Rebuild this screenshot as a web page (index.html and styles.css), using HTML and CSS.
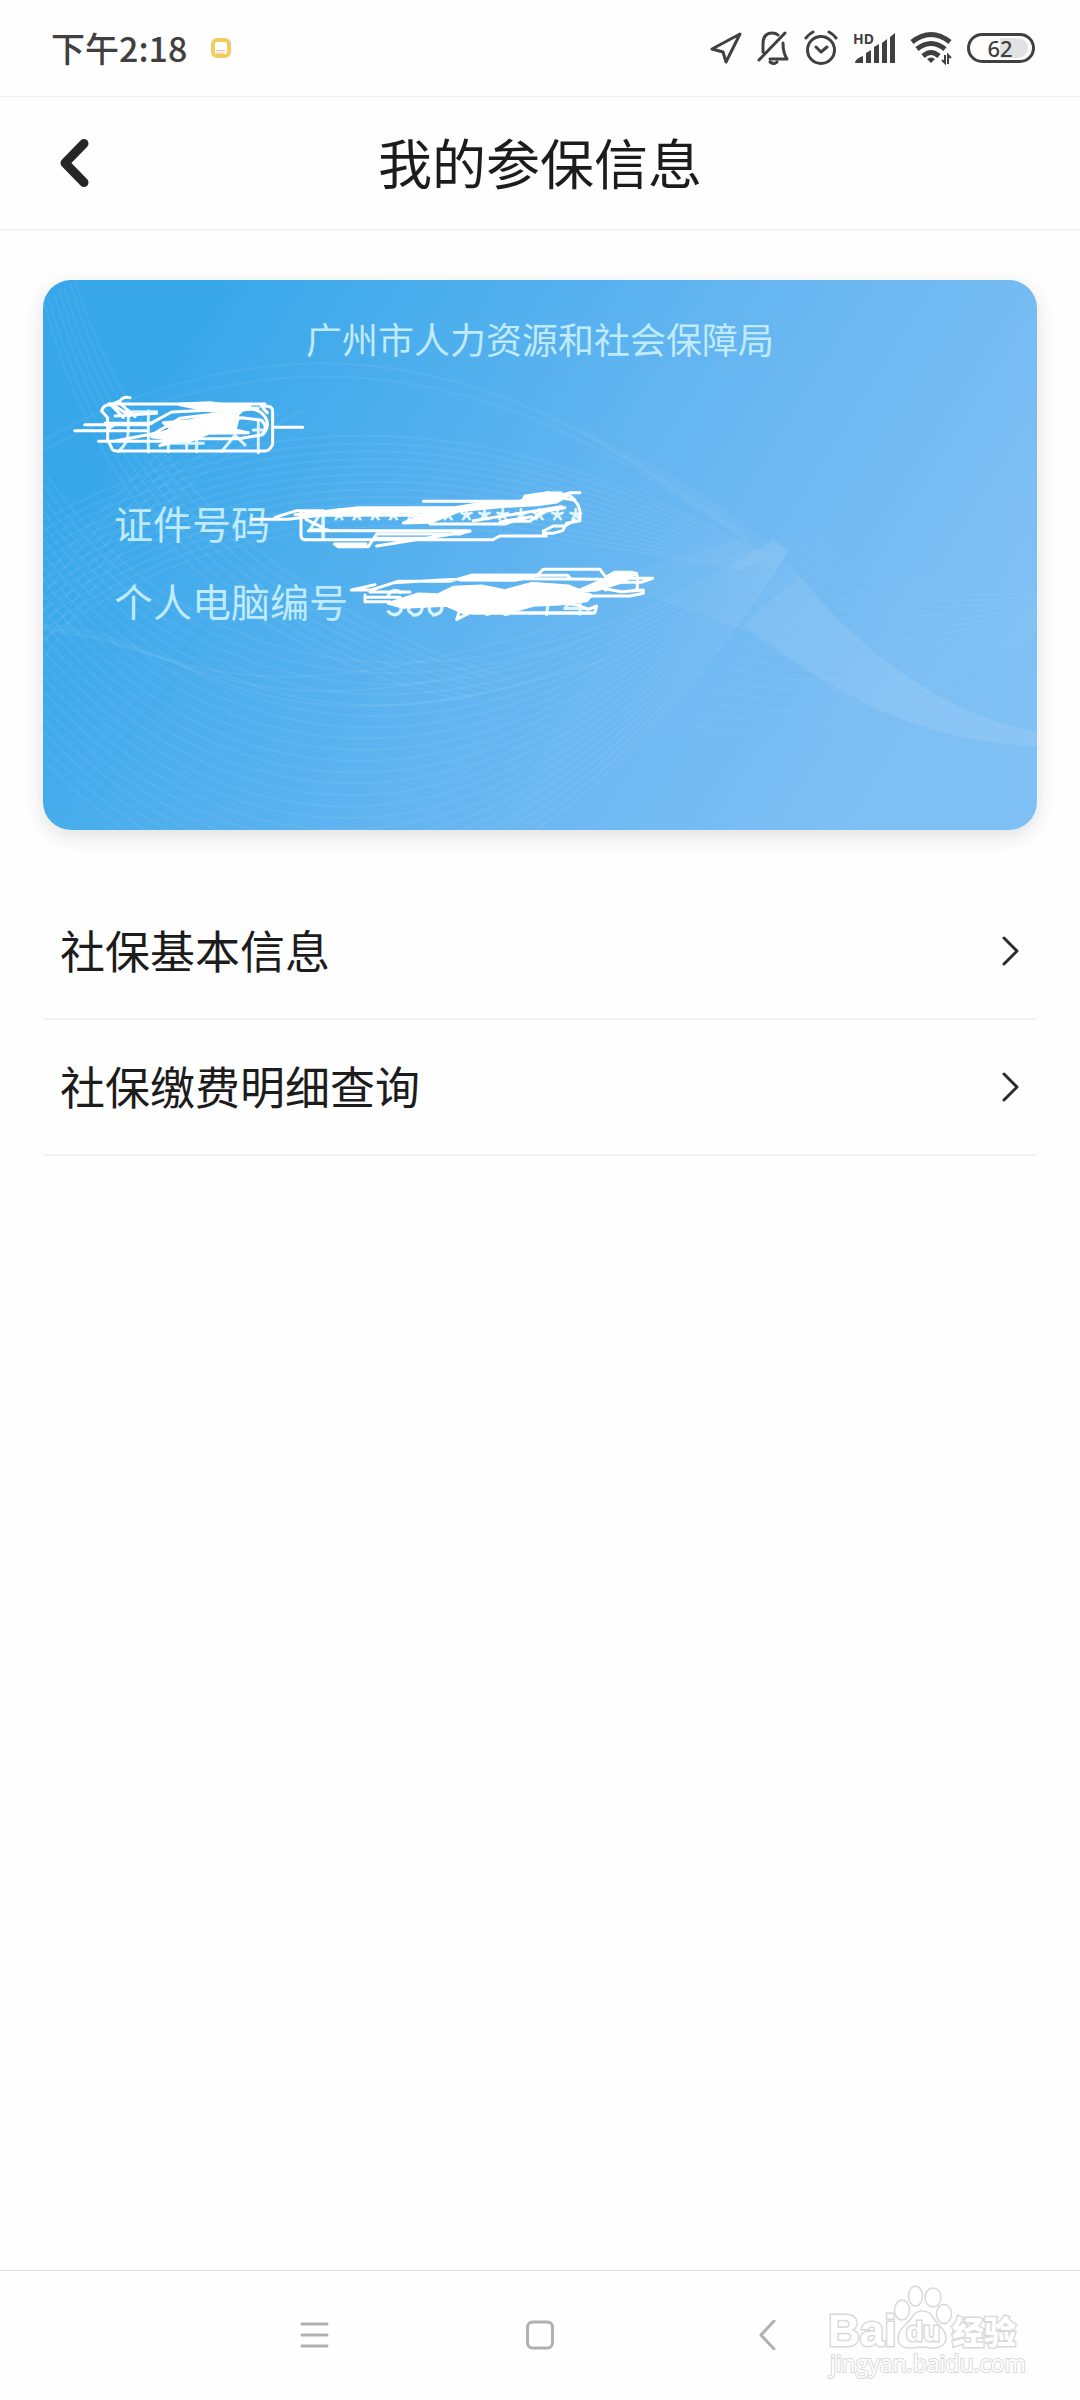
FILE: index.html
```html
<!DOCTYPE html>
<html lang="zh-CN">
<head>
<meta charset="utf-8">
<meta name="viewport" content="width=device-width, initial-scale=1">
<title>我的参保信息</title>
<link rel="stylesheet" href="styles.css">
</head>
<body>
<div class="status">
  <div class="status-left">
    <span>下午2:18</span>
    <svg width="20" height="20" viewBox="0 0 20 20" fill="none"><rect x="2" y="2" width="16" height="16" rx="4" fill="#fff" stroke="#f3cb5f" stroke-width="4"/><path d="M5 12.500h9M5 15h8" stroke="#f8b59a" stroke-width="1"/></svg>
  </div>
  <div class="status-right">
    <svg width="32" height="34" viewBox="0 0 32 34" fill="none" stroke="#404040" stroke-width="3" stroke-linejoin="round"><path d="M30 3 2 18l11 3 3 10z"/></svg>
    <svg width="32" height="34" viewBox="0 0 32 34" fill="none" stroke="#404040" stroke-width="3" stroke-linecap="round" stroke-linejoin="round"><path d="M2 29 28 2M6 21v-8C6 5 10 2 15 2q4 0 6 2M26 12q0 10 4 16H13M13 31q4 3 7 0"/></svg>
    <svg width="34" height="36" viewBox="0 0 34 36" fill="none" stroke="#404040" stroke-width="3" stroke-linecap="round" stroke-linejoin="round"><circle cx="17" cy="20" r="13.500"/><path d="m12 17 5 5 6-5M2 8q3-4 7-6M32 8q-3-4-7-6"/></svg>
    <svg width="42" height="34" viewBox="0 0 42 34" fill="#404040"><text class="hd" x="0" y="13">HD</text><path d="M2 32q0-4 8-7v7zM13 32V22l5-3v13zM21 32V16l5-3v19zM29 32v-20l5-4v24zM37 32V6l5-4v30z"/></svg>
    <svg width="42" height="34" viewBox="0 0 42 34" fill="none" stroke="#404040" stroke-width="5"><path d="M2 11q19-15 38 0M7 18q14-11 28 0M13 25q8-7 16 0"/><path d="m17 28q4-3 8 0l-4 4z" fill="#404040" stroke="none"/><path d="M35 24v8l-3-3M38 33v-9l3 3" stroke-width="2"/></svg>
    <span class="battery"><span>62</span></span>
  </div>
</div>
<header class="header">
  <button class="back" type="button" aria-label="返回"><svg width="34" height="52" viewBox="0 0 34 52" fill="none" stroke="#262626" stroke-width="9" stroke-linecap="round" stroke-linejoin="round"><path d="M26 6.500 7 26l19 19.500"/></svg></button>
  <h1>我的参保信息</h1>
</header>
<main>
  <section class="card">
    <svg class="waves" viewBox="0 0 993 550" preserveAspectRatio="none" fill="none" aria-hidden="true"></svg>
    <h2>广州市人力资源和社会保障局</h2>
    <dl class="info">
      <div><dt>证件号码</dt><dd>4**************</dd></div>
      <div><dt>个人电脑编号</dt><dd></dd></div>
    </dl>
    <svg class="scribble" width="993" height="550" viewBox="0 0 993 550" fill="none" stroke="#fff" stroke-width="9" stroke-linejoin="round" stroke-linecap="round" aria-hidden="true">
      <g transform="translate(-3 100) scale(.3333)">
        <path stroke="#d9f4ff" stroke-width="9" d="M250 95h100M265 90v60q0 40-30 65M325 92v124M385 185v30M400 190h90M440 185v28M470 160v55M545 215l40-50 30 30M655 120v98M640 150h30"/>
        <path d="M104 152h90l30-18h-90M176 184h45l130-25M205 72h470M270 53q-20-5-30 10l-30 12q-20-2-25 18l18 20v65l14 30q4 5 14 5h445q12 0 22-20V95q0-14-14-16h-20M700 142h88M210 184h180M205 134h120l70-38 260-12M225 108l125-8"/>
        <path d="M210 72l40 40M220 75l50 32M240 70l45 40M335 165l85-50 130-16 80-12q30 0 46 25t-8 52l-70 12H420l-80-10 160-48 90-34-170-12 90-4 105 14-60 60-110 35-85 20 100-52 145-32 60 8q20 22 4 38M670 86l12 12M195 130h140M205 152h115"/>
        <path fill="#fff" d="M370 128l80-6 80-18 45-12 20 20-10 38 40 8-120 2-60 24-60-6-50-8 60-22zM420 74l100 20 110-16z"/>
      </g>
      <g transform="translate(217 190) scale(.3333)">
        <path d="M-25 148h110l95-12h330M45 142l65-20h80M123 122v75q0 10 12 12h564l20-11h140M145 182h485l-30 10H350l-25 38H235l-12-8h95M350 205h180M630 184L350 228M490 94h300l70-25h45l-10 12M510 162h225l25-8h50l35-28 70-13M770 95l90-22M890 80l40-12h30M905 84l35 5q20 16 20 40v23l-40 8-12 22-30 8h-28M850 183l30-15h35l30-18M925 72l20 18"/>
        <path fill="#fff" d="M105 134l190-21h290l90-15h110l10-20 70-10 25 8h35l-35 20-60 8-110 6-120 12-90 35-80 2 60-22 10-10H340z"/>
        <path d="M640 152l265-42M720 156l95-16M138 148l50 25"/>
        <path stroke="#d9f4ff" stroke-width="10" d="M385 425q20 20 38-3v-18M455 430q-15-6-5-22M460 435q25 2 27-25M515 430q-10-8-6-20M520 435q30-5 25-28M680 434q15 0 22-24M735 434q20 0 18-24M860 434l8-60M945 375l-30 40h65M960 370v62M385 375q15-22 38-8"/>
        <path d="M274 360h60l80-26h155l64-18h290l10 12M345 344l-70 16M315 375v20h75M330 366h120M320 382h100M833 314l17-16h170l18 24 25-15h55l14 10v42l-18 4M1040 325h138l-35 12h-60M1045 340l-8 20M980 378h130l40-8v-10l-65 5-80-14M590 448l40-20h375l5-20-25 10-30-12-120-20M600 415l-8 30M640 430h360M765 326l260 2M400 338l210-12 90-8"/>
        <path fill="#fff" d="M385 400l90-28 60 2 45-22 85-4 70 14 80-22 110 8 45 18 25 10-15 16-80 10-80 4-70 20-140 2-50-22-130 6zM1040 325l30-15h60l-40 25-80 25-60 4zM600 330l35-14h200l-70 15z"/>
      </g>
    </svg>
  </section>
  <nav class="list" aria-label="社保查询">
    <a href="#basic"><span>社保基本信息</span><svg width="18" height="30" viewBox="0 0 18 30"><path d="m2 2 13 13L2 28"/></svg></a>
    <a href="#payment"><span>社保缴费明细查询</span><svg width="18" height="30" viewBox="0 0 18 30"><path d="m2 2 13 13L2 28"/></svg></a>
  </nav>
</main>
<footer class="sysnav">
  <button type="button" aria-label="菜单"><svg width="30" height="30" viewBox="0 0 30 30"><path d="M3 4h25M3 15h25M3 26h25"/></svg></button>
  <button type="button" aria-label="主页"><svg width="30" height="30" viewBox="0 0 30 30"><rect x="2.500" y="2" width="25" height="26" rx="5"/></svg></button>
  <button type="button" aria-label="返回上一页"><svg width="30" height="30" viewBox="0 0 30 30"><path d="M23 1 10 15l13 14"/></svg></button>
  <svg class="brand" width="208" height="104" viewBox="0 0 208 104" fill="#fff" stroke="#d9d9d9" stroke-width="1.500" aria-label="百度经验">
    <text class="brand-en" x="6" y="65">Bai</text>
    <g><ellipse cx="80" cy="29" rx="7.500" ry="10"/><ellipse cx="93.500" cy="15" rx="7" ry="10"/><ellipse cx="111" cy="16.500" rx="8" ry="9.500"/><ellipse cx="122" cy="33" rx="7.500" ry="9.500"/><path d="M100 30c9 0 11 7 15 12 5 5 9 9 9 15s-5 10-12 10c-5 0-8-1-12-1s-8 1-13 1c-7 0-11-4-11-10 0-8 6-11 11-17 4-5 6-10 13-10z"/></g>
    <text class="brand-du" x="84" y="60">du</text>
    <text class="brand-cn" x="130" y="63">经验</text>
    <text class="brand-url" x="8" y="91">jingyan.baidu.com</text>
  </svg>
</footer>
<script src="waves.js"></script>
</body>
</html>
```
FILE: styles.css
```css
* { box-sizing: border-box; }
body {
  margin: 0;
  min-height: 100vh;
  display: flex;
  flex-direction: column;
  background: #fefefe;
  color: #1c1c1c;
  font-family: "Noto Sans CJK SC", "Noto Sans", sans-serif;
}
svg { display: block; flex: none; }
button { background: none; border: 0; padding: 0; }
h1, h2, dl, dd { margin: 0; font-weight: 400; }

.status {
  height: 97px;
  padding: 0 45px 0 51px;
  border-bottom: 1px solid #f1f1f1;
  display: flex;
  justify-content: space-between;
  align-items: center;
  color: #404040;
}
.status-left { display: flex; align-items: center; gap: 24px; font-size: 34px; line-height: 48px; font-weight: 500; }
.status-right { display: flex; align-items: center; gap: 15px; }
.hd { font: 700 14px "Noto Sans", sans-serif; }
.battery {
  width: 68px;
  height: 30px;
  padding: 2px;
  border: 3px solid #404040;
  border-radius: 15px;
  display: flex;
}
.battery span {
  width: 56px;
  border-radius: 10px;
  background: linear-gradient(90deg, #fefefe 50%, #e2e2e2 50%);
  font: 500 22px/20px "Noto Sans", sans-serif;
  text-align: center;
}

.header {
  height: 134px;
  padding: 0 58px;
  border-bottom: 2px solid #f2f2f2;
  display: grid;
  grid-template-columns: 40px 1fr 40px;
  align-items: center;
}
.header h1 { padding-bottom: 2px; font-size: 54px; line-height: 80px; text-align: center; }

main { flex: 1; padding: 49px 43px; }
.card {
  position: relative;
  height: 550px;
  padding-top: 37px;
  border-radius: 28px;
  overflow: hidden;
  background: linear-gradient(122deg, #37a7ea 12%, #4fafed 34%, #6db8f2 62%, #7dbff4 85%, #80c1f5 100%);
  box-shadow: 0 6px 20px rgba(0, 0, 0, .12);
  color: #c0ebff;
}
.waves, .scribble { position: absolute; top: 0; left: 0; }
.waves { width: 100%; height: 100%; }
.card h2 { position: relative; font-size: 36px; line-height: 42px; text-align: center; }
.info { position: relative; padding: 124px 71px 0; font-size: 39px; line-height: 78px; }
.info div { display: flex; gap: 38px; }
.info dd { color: #e2f7ff; }

.list { padding-top: 54px; }
.list a {
  height: 136px;
  padding: 0 17px;
  border-bottom: 2px solid #f2f2f2;
  display: flex;
  align-items: center;
  justify-content: space-between;
  color: #1c1c1c;
  font-size: 45px;
  text-decoration: none;
}
.list span { padding-bottom: 4px; }
.list svg { fill: none; stroke: #2c2c2c; stroke-width: 3; stroke-linecap: round; stroke-linejoin: round; }

.sysnav {
  position: relative;
  height: 130px;
  padding-bottom: 2px;
  border-top: 1px solid #dedede;
  display: flex;
  justify-content: center;
  align-items: center;
  gap: 176px;
}
.sysnav button { width: 50px; height: 50px; display: grid; place-items: center; }
.sysnav button svg { fill: none; stroke: #b0b0b0; stroke-width: 3; stroke-linecap: round; stroke-linejoin: round; }
.brand { position: absolute; right: 50px; bottom: 15px; }
.brand text { paint-order: stroke; stroke-width: 3; }
.brand-en { font: 700 44px "Liberation Sans", sans-serif; }
.brand .brand-du { font: 700 28px "Liberation Sans", sans-serif; stroke-width: 3; }
.brand-cn { font: 900 32px "Noto Sans CJK SC", sans-serif; }
.brand .brand-url { font: 400 23px "Open Sans", sans-serif; stroke-width: 2; }
```
FILE: waves.js
```
// Each family blends evenly from one cubic path to another.
const families = [
  // arcs that crest in the left half
  { from: [0, 160, 330, -20, 560, 160, 704, 258], to: [0, 170, 330, 0, 560, 165, 704, 262], n: 2, o: 0.06 },
  { from: [0, 240, 260, 100, 500, 150, 720, 275], to: [0, 360, 230, 190, 460, 250, 700, 290], n: 13, o: 0.06 },
  // steep lines at the left edge
  { from: [0, 20, 60, 240, 190, 370, 420, 420], to: [32, 0, 90, 190, 240, 330, 470, 400], n: 7, o: 0.06 },
  { from: [0, 380, 90, 250, 130, 200, 260, 130], to: [0, 300, 50, 240, 90, 190, 160, 140], n: 6, o: 0.05 },
  // bowls that rise to the crossing
  { from: [0, 190, 190, 470, 520, 400, 730, 260], to: [0, 480, 260, 740, 520, 620, 745, 270], n: 22, o: 0.06 },
  { from: [0, 345, 150, 350, 200, 500, 560, 380], to: [0, 350, 130, 360, 170, 450, 500, 350], n: 3, o: 0.06 },
  // right-hand bowls
  { from: [765, 250, 790, 300, 900, 310, 993, 310], to: [620, 440, 750, 470, 850, 440, 993, 355], n: 17, o: 0.04 },
];
const svg = document.querySelector(".waves");
const ns = "http://www.w3.org/2000/svg";
function add(d, attrs) {
  const p = document.createElementNS(ns, "path");
  p.setAttribute("d", d);
  for (const k in attrs) p.setAttribute(k, attrs[k]);
  svg.append(p);
}
add("M520 140C630 190 700 235 755 295C800 350 880 430 993 452V466C880 462 800 420 700 350L560 300L700 258Z", { fill: "#fff", opacity: 0.04 });
add("M755 295C800 350 880 430 993 452V466C880 462 800 420 700 345Z", { fill: "#fff", opacity: 0.06 });
for (const f of families) {
  for (let i = 0; i < f.n; i++) {
    const v = f.from.map((a, k) => Math.round(a + (f.to[k] - a) * i / (f.n - 1)));
    add(`M${v[0]} ${v[1]}C${v.slice(2).join(" ")}`, { stroke: "#fff", "stroke-width": 2, opacity: f.o });
  }
}
```
